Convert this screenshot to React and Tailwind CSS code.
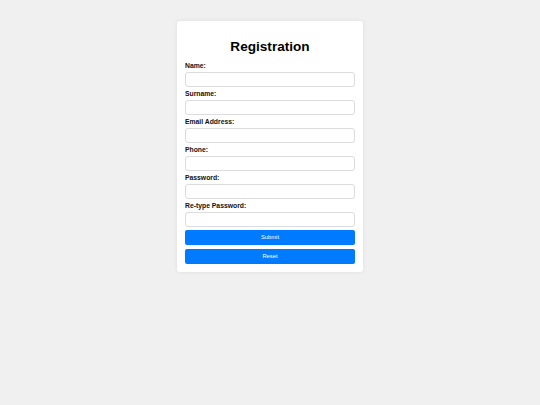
import React from 'react';

const fields = ['Name:', 'Surname:', 'Email Address:', 'Phone:', 'Password:', 'Re-type Password:'];

export default function App() {
  return (
    <div className="min-h-[405px] w-full bg-[#f0f0f0] pt-[21px] font-['Liberation_Sans',Arial,sans-serif]">
      <div className="mx-auto w-[186px] rounded-[3px] bg-white px-2 pt-2 pb-[8px] shadow-[0_0_4px_rgba(0,0,0,0.08)]">
        <h2 className="mt-[10px] mb-[7px] text-center text-[13.6px] leading-[16px] font-bold text-black">
          Registration
        </h2>
        <form onSubmit={(e) => e.preventDefault()}>
          {fields.map((label) => (
            <div key={label} className="mb-[3px]">
              <label className="mb-[2px] block text-[6.8px] leading-[8px] font-bold text-[#111]">{label}</label>
              <input
                type={label.includes('Password') ? 'password' : 'text'}
                className="block h-[15px] w-full rounded-[3px] border border-[#dcdcdc] bg-white outline-none"
              />
            </div>
          ))}
          <button
            type="submit"
            className="mt-[3px] block h-[15px] w-full rounded-[2px] bg-[#007bff] text-[5.8px] text-white"
          >
            Submit
          </button>
          <button
            type="reset"
            className="mt-[4px] block h-[15px] w-full rounded-[2px] bg-[#007bff] text-[5.8px] text-white"
          >
            Reset
          </button>
        </form>
      </div>
    </div>
  );
}
